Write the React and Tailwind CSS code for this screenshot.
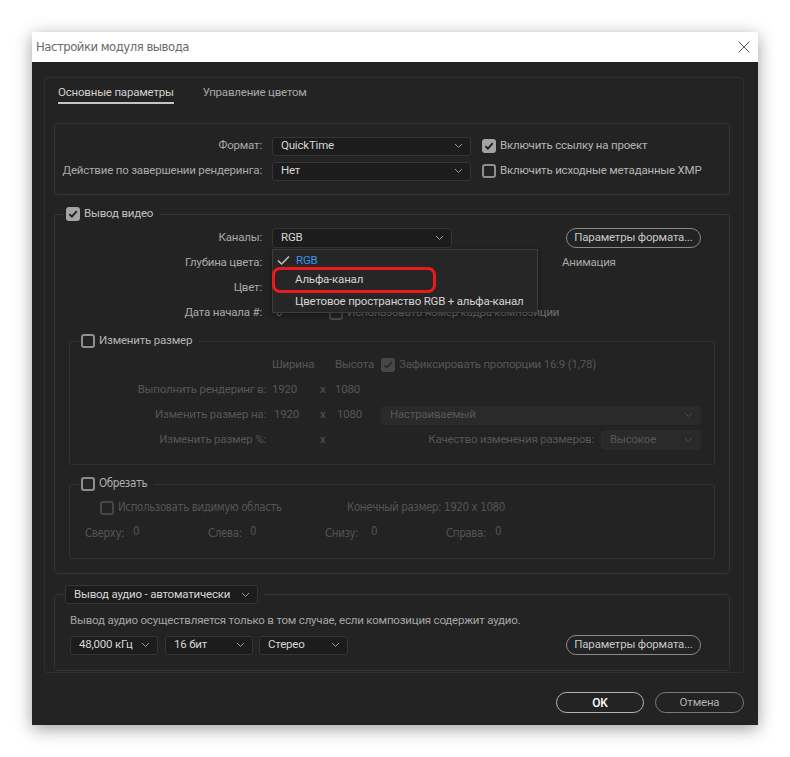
import clsx from "clsx";

const Chevron = ({ dim }) => (
  <svg width="9" height="6" viewBox="0 0 9 6" className="shrink-0">
    <path
      d="M1 1 L4.5 4.5 L8 1"
      stroke={dim ? "#4a4a4a" : "#9a9a9a"}
      strokeWidth="1"
      fill="none"
    />
  </svg>
);

const Check = ({ checked, dim }) =>
  checked ? (
    <span
      className={clsx(
        "w-[14px] h-[14px] shrink-0 rounded-[3px] flex items-center justify-center",
        dim ? "bg-[#474747]" : "bg-[#a3a3a3]"
      )}
    >
      <svg width="10" height="10" viewBox="0 0 10 10">
        <path
          d="M1.4 5.2 L3.9 7.7 L8.7 2.2"
          stroke={dim ? "#2b2b2b" : "#1f1f1f"}
          strokeWidth="1.8"
          fill="none"
        />
      </svg>
    </span>
  ) : (
    <span
      className={clsx(
        "w-[14px] h-[14px] shrink-0 rounded-[3px] border-2",
        dim ? "border-[#474747]" : "border-[#8e8e8e]"
      )}
    />
  );

const Select = ({ value, dim, className }) => (
  <div
    className={clsx(
      "flex items-center justify-between rounded-[3px] border pl-2 pr-[7px] shrink-0",
      dim
        ? "bg-[#2a2a2a] border-[#2a2a2a] text-[#575757]"
        : "bg-[#1c1c1c] border-[#353535] text-[#d6d6d6]",
      className
    )}
  >
    <span>{value}</span>
    <Chevron dim={dim} />
  </div>
);

const PillButton = ({ title, className }) => (
  <button
    className={clsx(
      "rounded-full border leading-none flex items-center justify-center",
      className
    )}
  >
    {title}
  </button>
);

const Label = ({ children, className }) => (
  <span className={clsx("text-right shrink-0", className)}>{children}</span>
);

const App = () => {
  return (
    <div className="min-h-screen bg-white pt-8 pl-8 font-['Roboto',sans-serif] text-[11.5px] tracking-[-0.2px] whitespace-nowrap">
      <div className="w-[726px] h-[693px] flex flex-col shadow-[0_4px_16px_rgba(0,0,0,0.38)]">
        {/* title bar */}
        <div className="h-[30px] bg-white flex items-center justify-between pl-1 pr-[8px]">
          <span className="text-[13px] text-[#6a6a6a] font-['DejaVu_Sans',sans-serif] font-stretch-condensed tracking-[-0.5px]">
            Настройки модуля вывода
          </span>
          <svg width="12" height="12" viewBox="0 0 12 12">
            <path d="M0.5 0.5 L11.5 11.5 M11.5 0.5 L0.5 11.5" stroke="#5a5a5a" strokeWidth="1" />
          </svg>
        </div>

        {/* body */}
        <div className="flex-1 bg-[#232323] flex flex-col pl-3 pr-[14px]">
          <div className="mt-[15px] w-[700px] h-[596px] border border-[#2f2f2f] rounded-[3px] flex flex-col">
            {/* tabs */}
            <div className="flex gap-[29px] pl-[13px] pt-[6px]">
              <span className="text-[#d0d0d0] leading-4 pb-[2px] border-b-2 border-[#c4c4c4]">
                Основные параметры
              </span>
              <span className="text-[#a8a8a8] leading-4">Управление цветом</span>
            </div>

            {/* section 1 */}
            <div className="mt-[19px] mx-[9px] w-[676px] h-[72px] border border-[#353535] rounded-[3px] pt-[13px] flex flex-col gap-[7px]">
              <div className="flex items-center h-[18px]">
                <Label className="w-[207px] text-[#a9a9a9]">Формат:</Label>
                <Select value="QuickTime" className="ml-[10px] w-[199px] h-[19px]" />
                <div className="ml-[11px] flex items-center gap-[4px]">
                  <Check checked />
                  <span className="text-[#b5b5b5]">Включить ссылку на проект</span>
                </div>
              </div>
              <div className="flex items-center h-[18px]">
                <Label className="w-[207px] text-[#a9a9a9]">Действие по завершении рендеринга:</Label>
                <Select value="Нет" className="ml-[10px] w-[199px] h-[19px]" />
                <div className="ml-[11px] flex items-center gap-[4px]">
                  <Check />
                  <span className="text-[#b5b5b5]">Включить исходные метаданные XMP</span>
                </div>
              </div>
            </div>

            {/* video output */}
            <fieldset className="mt-[11px] mx-[9px] w-[676px] border border-[#353535] rounded-[3px] pb-[14px]">
              <legend className="ml-[9px] pl-[2px] pr-[7px] flex items-center gap-[4px] h-[16px]">
                <Check checked />
                <span className="text-[#c2c2c2]">Вывод видео</span>
              </legend>

              <div className="mt-[6px] flex flex-col gap-[5px]">
                <div className="flex items-center h-[20px] relative">
                  <Label className="w-[207px] text-[#a9a9a9]">Каналы:</Label>
                  <div className="relative ml-[10px]">
                    <Select value="RGB" className="w-[180px] h-[20px]" />
                    {/* open menu */}
                    <div className="absolute left-0 top-[21px] z-10 w-[266px] h-[64px] bg-[#262626] border border-[#3d3d3d] flex flex-col pt-[1px] shadow-[0_2px_6px_rgba(0,0,0,0.4)]">
                      <div className="h-[19px] flex items-center pl-[4px] gap-[6px]">
                        <svg width="13" height="11" viewBox="0 0 13 11">
                          <path d="M1 5.6 L4.6 9 L12 1.5" stroke="#bdbdbd" strokeWidth="1.6" fill="none" />
                        </svg>
                        <span className="text-[#3a90ec]">RGB</span>
                      </div>
                      <div className="h-[22px] flex items-center pl-[22px] text-[#d4d4d4] relative">
                        Альфа-канал
                        <span className="absolute left-[-1px] top-[-2px] w-[164px] h-[26px] rounded-[8px] border-[3px] border-[#ec1b1b]" />
                      </div>
                      <div className="h-[22px] flex items-center pl-[22px] text-[#d4d4d4]">
                        Цветовое пространство RGB + альфа-канал
                      </div>
                    </div>
                  </div>
                  <PillButton
                    title="Параметры формата..."
                    className="ml-[114px] w-[135px] h-[20px] border-[#8a8a8a] text-[#c8c8c8]"
                  />
                </div>
                <div className="flex items-center h-[20px]">
                  <Label className="w-[207px] text-[#a9a9a9]">Глубина цвета:</Label>
                  <span className="ml-[300px] text-[#a9a9a9]">Анимация</span>
                </div>
                <div className="flex items-center h-[20px]">
                  <Label className="w-[207px] text-[#a9a9a9]">Цвет:</Label>
                </div>
                <div className="flex items-center h-[20px]">
                  <Label className="w-[207px] text-[#a9a9a9]">Дата начала #:</Label>
                  <span className="ml-[14px] text-[#6a6a6a]">0</span>
                  <div className="ml-[47px] flex items-center gap-[4px]">
                    <Check dim />
                    <span className="text-[#6e6e6e]">Использовать номер кадра композиции</span>
                  </div>
                </div>
              </div>

              {/* resize */}
              <fieldset className="mt-[10px] mx-[14px] w-[646px] border border-[#333333] rounded-[3px] pb-[14px] text-[#565656]">
                <legend className="ml-[9px] pl-[2px] pr-[7px] flex items-center gap-[4px] h-[16px]">
                  <Check />
                  <span className="text-[#b5b5b5]">Изменить размер</span>
                </legend>
                <div className="mt-[6px] flex flex-col gap-[5px]">
                  <div className="flex items-center h-[20px]">
                    <Label className="w-[196px]" />
                    <span className="ml-[6px] w-[63px]">Ширина</span>
                    <span className="w-[46px]">Высота</span>
                    <div className="flex items-center gap-[4px]">
                      <Check checked dim />
                      <span>Зафиксировать пропорции 16:9 (1,78)</span>
                    </div>
                  </div>
                  <div className="flex items-center h-[20px]">
                    <Label className="w-[196px]">Выполнить рендеринг в:</Label>
                    <span className="ml-[6px] w-[48px]">1920</span>
                    <span className="w-[15px]">x</span>
                    <span className="w-[46px]">1080</span>
                  </div>
                  <div className="flex items-center h-[20px]">
                    <Label className="w-[196px]">Изменить размер на:</Label>
                    <span className="ml-[8px] w-[46px]">1920</span>
                    <span className="w-[17px]">x</span>
                    <span className="w-[44px]">1080</span>
                    <Select dim value="Настраиваемый" className="w-[320px] h-[19px]" />
                  </div>
                  <div className="flex items-center h-[20px]">
                    <Label className="w-[196px]">Изменить размер %:</Label>
                    <span className="ml-[54px] w-[15px]">x</span>
                    <Label className="w-[259px]">Качество изменения размеров:</Label>
                    <Select dim value="Высокое" className="ml-[7px] w-[100px] h-[20px]" />
                  </div>
                </div>
              </fieldset>

              {/* crop */}
              <fieldset className="mt-[11px] mx-[14px] w-[646px] border border-[#333333] rounded-[3px] pb-[14px] text-[#545454] font-['DejaVu_Sans',sans-serif] font-stretch-condensed text-[11.5px] tracking-[-0.4px]">
                <legend className="ml-[9px] pl-[2px] pr-[7px] flex items-center gap-[4px] h-[16px]">
                  <Check />
                  <span className="text-[#b0b0b0]">Обрезать</span>
                </legend>
                <div className="mt-[6px] flex items-center h-[20px] pl-[30px]">
                  <Check dim />
                  <span className="ml-[4px] w-[229px]">Использовать видимую область</span>
                  <span>Конечный размер: 1920 x 1080</span>
                </div>
                <div className="mt-[6px] flex items-center h-[20px] pl-[15px]">
                  <span className="w-[48px]">Сверху:</span>
                  <span className="w-[75px] -mt-[4px]">0</span>
                  <span className="w-[42px]">Слева:</span>
                  <span className="w-[75px] -mt-[4px]">0</span>
                  <span className="w-[46px]">Снизу:</span>
                  <span className="w-[75px] -mt-[4px]">0</span>
                  <span className="w-[49px]">Справа:</span>
                  <span className="-mt-[4px]">0</span>
                </div>
              </fieldset>
            </fieldset>

            {/* audio */}
            <fieldset className="mt-[11px] mx-[9px] w-[676px] border border-[#353535] rounded-[3px] pb-[15px]">
              <legend className="ml-[10px] pr-[6px]">
                <Select value="Вывод аудио - автоматически" className="w-[193px] h-[19px]" />
              </legend>
              <p className="mt-[8px] pl-[15px] leading-4 text-[#a5a5a5]">
                Вывод аудио осуществляется только в том случае, если композиция содержит аудио.
              </p>
              <div className="mt-[7px] pl-[15px] pr-[28px] flex items-center">
                <Select value="48,000 кГц" className="w-[88px] h-[19px]" />
                <Select value="16 бит" className="ml-[7px] w-[88px] h-[19px]" />
                <Select value="Стерео" className="ml-[6px] w-[89px] h-[19px]" />
                <PillButton
                  title="Параметры формата..."
                  className="ml-auto w-[135px] h-[20px] border-[#8a8a8a] text-[#c8c8c8]"
                />
              </div>
            </fieldset>
          </div>

          {/* dialog buttons */}
          <div className="mt-[19px] flex justify-end gap-[11px]">
            <PillButton title="OK" className="w-[88px] h-[21px] border-[#b5b5b5] text-white font-medium text-[12px]" />
            <PillButton title="Отмена" className="w-[89px] h-[21px] border-[#7a7a7a] text-[#b0b0b0]" />
          </div>
        </div>
      </div>
    </div>
  );
};

export default App;
